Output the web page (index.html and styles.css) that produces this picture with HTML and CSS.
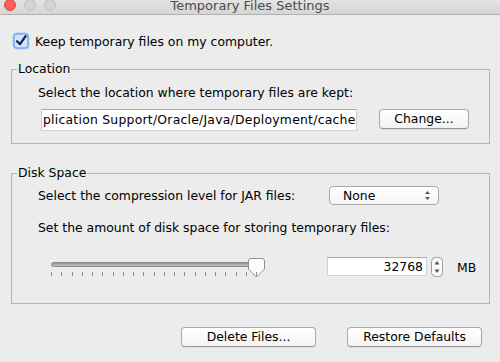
FILE: index.html
```html
<!DOCTYPE html>
<html lang="en">
<head>
    <meta charset="UTF-8">
    <title>Temporary Files Settings</title>
    <link rel="stylesheet" href="styles.css">
</head>
<body>
    <div class="titlebar">
        <div class="lights">
            <span class="light red"></span>
            <span class="light"></span>
            <span class="light"></span>
        </div>
        <div class="title">Temporary Files Settings</div>
        <div></div>
    </div>

    <div class="dialog">
        <label class="check-row">
            <svg class="checkbox" width="18" height="18" viewBox="0 0 18 18">
                <rect x="0.5" y="0.5" width="17" height="17" rx="4" fill="#a9cdf7"/>
                <rect x="2" y="2" width="14" height="14" rx="3" fill="#cfe3fb" stroke="#5f9ae6"/>
                <path d="M5 9.2 L8 12.2 L13.6 4.2" fill="none" stroke="#14244d" stroke-width="2.2" stroke-linecap="round" stroke-linejoin="round"/>
            </svg>
            <span>Keep temporary files on my computer.</span>
        </label>

        <fieldset class="group location">
            <legend>Location</legend>
            <div class="group-body">
                <div class="label">Select the location where temporary files are kept:</div>
                <div class="path-row">
                    <div class="textfield path">plication Support/Oracle/Java/Deployment/cache</div>
                    <button class="btn change">Change...</button>
                </div>
            </div>
        </fieldset>

        <fieldset class="group disk">
            <legend>Disk Space</legend>
            <div class="group-body">
                <div class="combo-row">
                    <span class="label">Select the compression level for JAR files:</span>
                    <div class="combo">
                        <span>None</span>
                        <svg width="7" height="11" viewBox="0 0 7 11">
                            <path d="M3.5 1 L6 4 L1 4 Z" fill="#555"/>
                            <path d="M3.5 10 L6 7 L1 7 Z" fill="#555"/>
                        </svg>
                    </div>
                </div>
                <div class="label space-label">Set the amount of disk space for storing temporary files:</div>
                <div class="slider-row">
                    <div class="slider">
                        <div class="track"></div>
                        <svg class="thumb" width="17" height="20" viewBox="0 0 17 20">
                            <path d="M3 0.5 H14 Q16.5 0.5 16.5 3 V11 L8.5 19 L0.5 11 V3 Q0.5 0.5 3 0.5 Z" fill="#fdfdfd" stroke="#8f8f8f"/>
                        </svg>
                        <div class="ticks" id="ticks"></div>
                    </div>
                    <div class="textfield size">32768</div>
                    <div class="stepper">
                        <svg width="12" height="20" viewBox="0 0 12 20">
                            <rect x="0.5" y="0.5" width="11" height="19" rx="4" fill="#fafafa" stroke="#9c9c9c"/>
                            <path d="M6 4 L8.5 7.5 L3.5 7.5 Z" fill="#555"/>
                            <path d="M6 16 L8.5 12.5 L3.5 12.5 Z" fill="#555"/>
                        </svg>
                    </div>
                    <span class="unit">MB</span>
                </div>
            </div>
        </fieldset>

        <div class="actions">
            <button class="btn wide">Delete Files...</button>
            <button class="btn wide">Restore Defaults</button>
        </div>
    </div>

    <script>
        // slider tick marks
        const ticks = document.getElementById('ticks');
        for (let i = 0; i < 21; i++) {
            const t = document.createElement('span');
            t.className = 'tick';
            ticks.appendChild(t);
        }
    </script>
</body>
</html>
```

FILE: styles.css
```css
* {
    box-sizing: border-box;
}

body {
    margin: 0;
    width: 500px;
    height: 362px;
    overflow: hidden;
    background: #ececec;
    color: #000;
    font-family: 'DejaVu Sans', sans-serif;
    font-size: 12.4px;
}

.titlebar {
    height: 15px;
    display: grid;
    grid-template-columns: 1fr auto 1fr;
    background: linear-gradient(#e3e3e3, #d5d5d5);
    border-bottom: 1px solid #b1b1b1;
    overflow: hidden;
}

.lights {
    display: flex;
    gap: 8px;
    margin: -1px 0 0 4px;
}

.light {
    width: 12px;
    height: 12px;
    border-radius: 50%;
    background: #d3d3d3;
    border: 1px solid #c2c2c2;
}

.light.red {
    background: #fc5f57;
    border-color: #e0443e;
}

.title {
    font-size: 13px;
    line-height: 14px;
    margin-top: -1px;
    color: #4c4c4c;
}

.dialog {
    display: flex;
    flex-direction: column;
}

.check-row {
    display: flex;
    align-items: center;
    gap: 5px;
    padding: 16px 0 0 12px;
    height: 36px;
}

.group {
    margin: 0 10px 0 11px;
    padding: 0 0 0 5px;
    border: 1px solid #b4b4b4;
}

.group legend {
    padding: 0 1px;
    line-height: 16px;
}

.group-body {
    display: flex;
    flex-direction: column;
    padding-left: 21px;
}

.label {
    line-height: 16px;
}

.location {
    margin-top: 10px;
    height: 83px;
}

.location .group-body {
    gap: 8px;
    padding-top: 8px;
}

.path-row {
    display: flex;
    align-items: flex-start;
    gap: 22px;
}

.textfield {
    background: #fff;
    border: 1px solid #cfcfcf;
    border-top-color: #a9a9a9;
    white-space: nowrap;
    overflow: hidden;
}

.path {
    width: 316px;
    height: 22px;
    line-height: 20px;
    padding-left: 1px;
    margin-left: 3px;
    letter-spacing: 0.24px;
}

.btn {
    font-family: inherit;
    font-size: 12.4px;
    color: #000;
    background: linear-gradient(#ffffff, #f3f3f3);
    border: 1px solid #a9a9a9;
    border-bottom-color: #979797;
    border-radius: 4px;
    box-shadow: 0 1px 0 rgba(0, 0, 0, 0.05);
    height: 20px;
    padding: 0;
    line-height: 18px;
}

.change {
    width: 90px;
}

.disk {
    margin-top: 21px;
    height: 139px;
}

.disk .group-body {
    padding-top: 5px;
}

.combo-row {
    display: flex;
    align-items: center;
}

.combo-row .label {
    width: 291px;
}

.combo {
    width: 110px;
    height: 19px;
    display: flex;
    align-items: center;
    justify-content: space-between;
    padding: 0 7px 0 13px;
    background: linear-gradient(#ffffff, #f4f4f4);
    border: 1px solid #a9a9a9;
    border-radius: 4px;
}

.space-label {
    margin-top: 15px;
}

.slider-row {
    display: flex;
    align-items: flex-start;
    margin-top: 21px;
}

.slider {
    position: relative;
    width: 216px;
    height: 22px;
    margin-left: 6px;
}

.track {
    position: absolute;
    left: 7px;
    top: 5px;
    width: 205px;
    height: 5px;
    border-radius: 3px;
    background: linear-gradient(#8f8f8f, #c4c4c4);
    border: 1px solid #8a8a8a;
}

.thumb {
    position: absolute;
    left: 204px;
    top: 1px;
}

.ticks {
    position: absolute;
    left: 7px;
    top: 15px;
    width: 206px;
    display: flex;
    justify-content: space-between;
}

.tick {
    width: 1px;
    height: 4px;
    background: #8a8a8a;
}

.size {
    width: 100px;
    height: 19px;
    line-height: 17px;
    margin-left: 67px;
    text-align: right;
    padding-right: 3px;
}

.stepper {
    margin-left: 4px;
    height: 20px;
}

.unit {
    margin-left: 14px;
    line-height: 21px;
}

.actions {
    display: flex;
    justify-content: flex-end;
    gap: 31px;
    padding: 23px 18px 0 0;
}

.wide {
    width: 135px;
}
```
